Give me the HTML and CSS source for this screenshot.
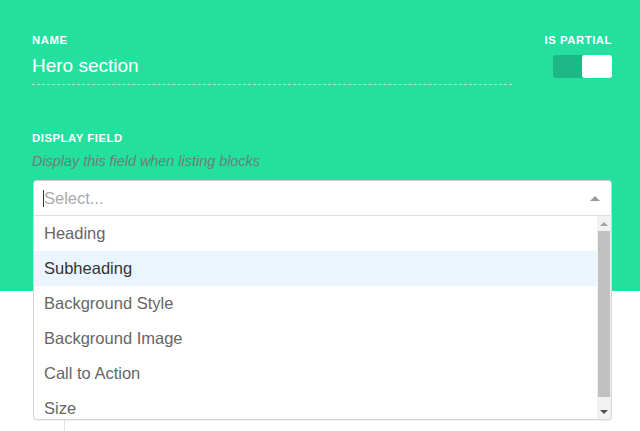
FILE: index.html
```html
<!DOCTYPE html>
<html>
<head>
<meta charset="utf-8">
<link rel="stylesheet" href="styles.css">
</head>
<body>
<div class="panel">
  <div class="row-top">
    <div class="name-field">
      <div class="label">Name</div>
      <div class="name-input">Hero section</div>
    </div>
    <div class="partial-field">
      <div class="label">Is partial</div>
      <div class="toggle"><span class="toggle-off"></span><span class="toggle-knob"></span></div>
    </div>
  </div>
  <div class="display-field">
    <div class="label">Display field</div>
    <div class="hint">Display this field when listing blocks</div>
    <div class="select">
      <div class="control">
        <span class="caret"></span>
        <span class="placeholder">Select...</span>
        <span class="arrow"></span>
      </div>
      <div class="menu">
        <div class="options">
          <div class="option">Heading</div>
          <div class="option focused">Subheading</div>
          <div class="option">Background Style</div>
          <div class="option">Background Image</div>
          <div class="option">Call to Action</div>
          <div class="option">Size</div>
        </div>
        <div class="scrollbar">
          <div class="sb-btn"><span class="sb-up"></span></div>
          <div class="sb-track"><div class="sb-thumb"></div></div>
          <div class="sb-btn"><span class="sb-down"></span></div>
        </div>
      </div>
    </div>
  </div>
</div>
<div class="below">
  <div class="below-line"></div>
</div>
</body>
</html>
```

FILE: styles.css
```css
* { box-sizing: border-box; }
html, body { margin: 0; padding: 0; background: #fff; }
body { font-family: "Liberation Sans", Arial, Helvetica, sans-serif; overflow: hidden; width: 640px; height: 431px; }

.panel {
  background: #24e09e;
  height: 291px;
  padding: 34px 28px 0 32px;
}

.row-top {
  display: flex;
  justify-content: space-between;
  align-items: flex-start;
}

.label {
  color: #fff;
  font-size: 11.3px;
  line-height: 13px;
  font-weight: 700;
  letter-spacing: 0.55px;
  text-transform: uppercase;
}

.name-field { width: 480px; }

.name-input {
  margin-top: 7px;
  color: #fff;
  font-size: 19px;
  line-height: 24px;
  padding-bottom: 6px;
  border-bottom: 1px dashed rgba(255, 255, 255, 0.55);
}

.partial-field {
  display: flex;
  flex-direction: column;
  align-items: flex-end;
}

.toggle {
  margin-top: 8px;
  width: 59px;
  height: 23px;
  display: flex;
}
.toggle-off {
  width: 29px;
  background: #1eb887;
  border-radius: 3px 0 0 3px;
}
.toggle-knob {
  width: 30px;
  background: #fff;
  border-radius: 3px;
}

.display-field { margin-top: 47px; }

.hint {
  margin-top: 8px;
  font-style: italic;
  font-size: 14.4px;
  line-height: 17px;
  color: #6b7f78;
}

.select {
  position: relative;
  margin-top: 10px;
  margin-left: 1px;
}

.control {
  height: 36px;
  background: #fff;
  border: 1px solid #d0d0d0;
  border-bottom-color: #e0e0e0;
  border-radius: 4px 4px 0 0;
  display: flex;
  align-items: center;
  padding: 0 10px 0 9px;
}
.caret {
  width: 1px;
  height: 17px;
  background: #333;
}
.placeholder {
  flex: 1;
  color: #aaa;
  font-size: 16.5px;
  line-height: 20px;
}
.arrow {
  width: 0;
  height: 0;
  border-style: solid;
  border-width: 0 5px 5px;
  border-color: transparent transparent #999;
  margin-right: 1px;
}

.menu {
  position: absolute;
  top: 100%;
  left: 0;
  right: 0;
  height: 204px;
  background: #fff;
  border: 1px solid #d6d6d6;
  border-top: none;
  border-radius: 0 0 4px 4px;
  box-shadow: 0 1px 0 rgba(0, 0, 0, 0.06);
  display: flex;
  overflow: hidden;
}

.options {
  flex: 1;
  overflow: hidden;
}
.option {
  padding: 8px 10px;
  font-size: 16.5px;
  line-height: 19px;
  color: #666;
}
.option.focused {
  background: #ebf5ff;
  color: #333;
}

.scrollbar {
  width: 14px;
  background: #f1f1f1;
  display: flex;
  flex-direction: column;
}
.sb-btn {
  height: 15px;
  display: flex;
  align-items: center;
  justify-content: center;
}
.sb-up, .sb-down {
  width: 0;
  height: 0;
  border-style: solid;
}
.sb-up {
  border-width: 0 4px 4px;
  border-color: transparent transparent #a3a3a3;
}
.sb-down {
  border-width: 4px 4px 0;
  border-color: #505050 transparent transparent;
}
.sb-track {
  flex: 1;
  padding: 0 1px;
}
.sb-thumb {
  height: 166px;
  background: #c1c1c1;
}

.below {
  padding-left: 64px;
}
.below-line {
  height: 140px;
  border-left: 1px solid #e3e3e3;
}
```
